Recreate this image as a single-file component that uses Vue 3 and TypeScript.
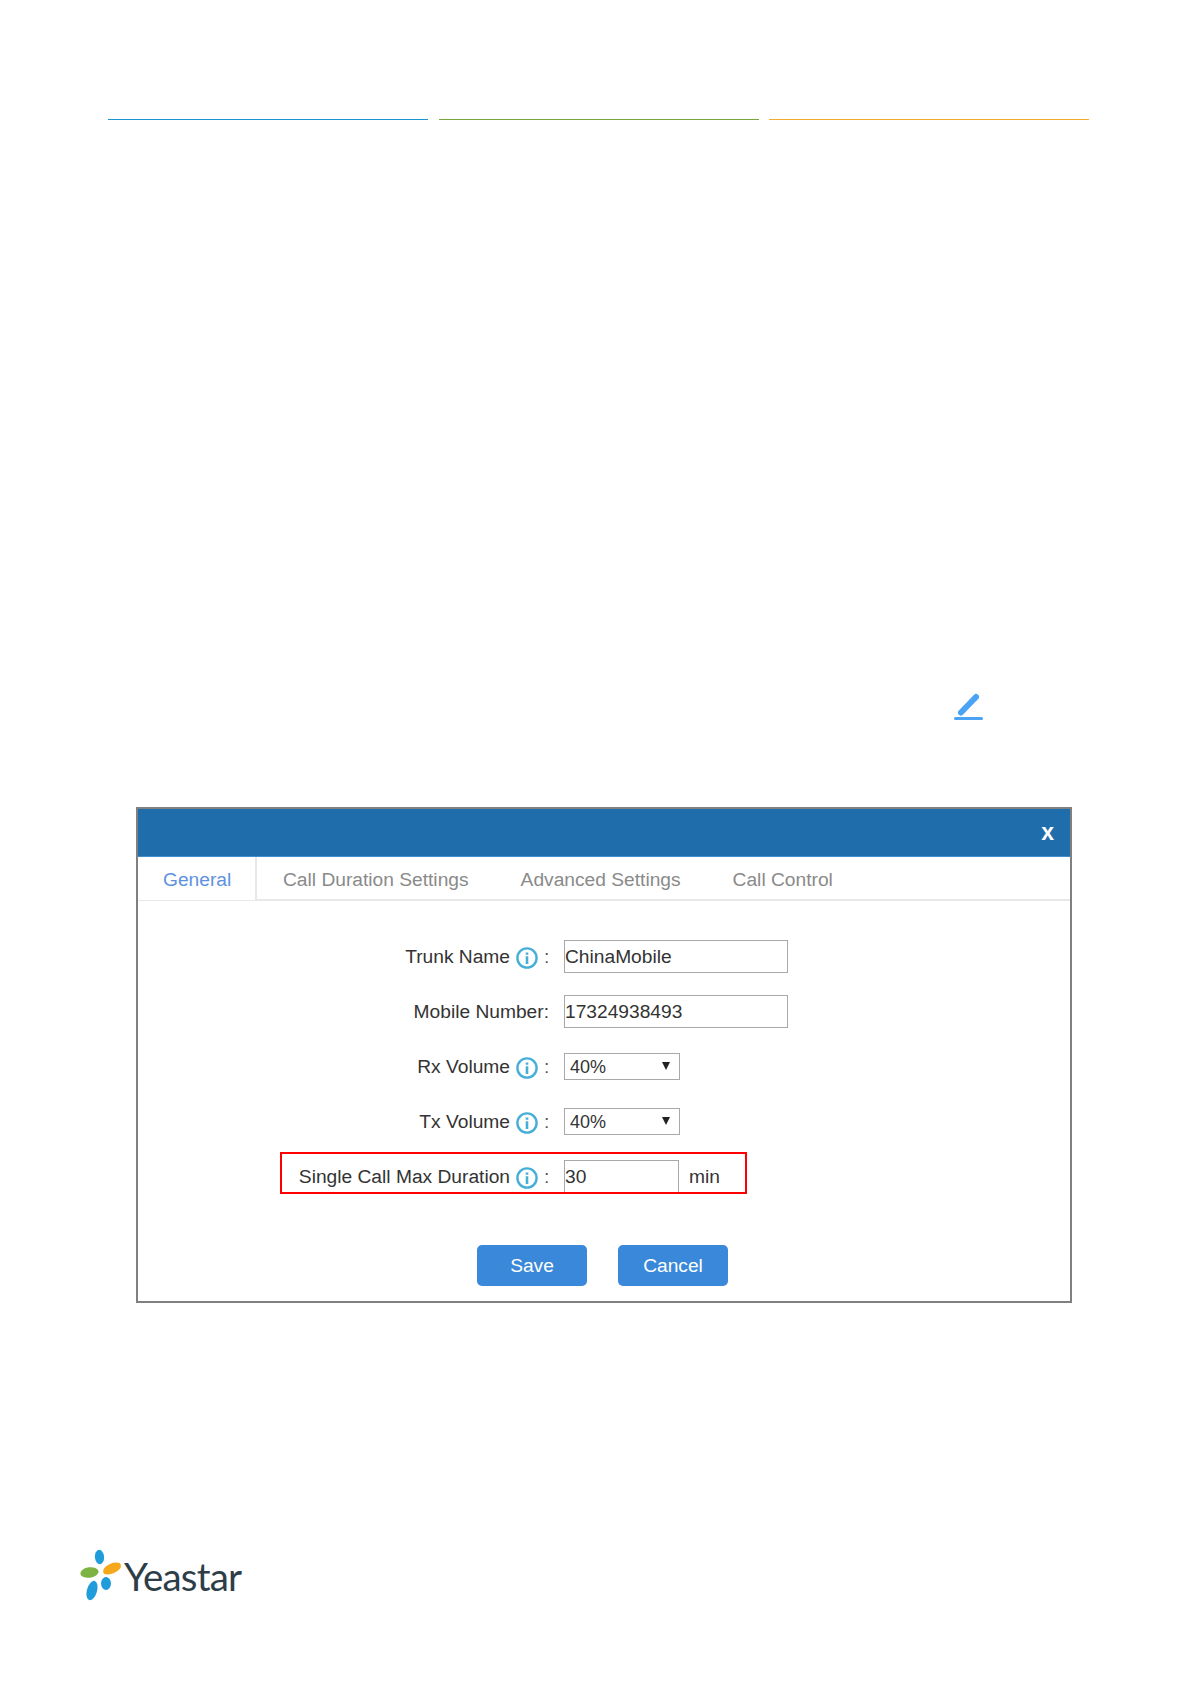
<script setup lang="ts">
interface Row {
  label: string
  info: boolean
  kind: 'text' | 'select' | 'unit'
  value: string
}

const tabs = ['Call Duration Settings', 'Advanced Settings', 'Call Control']

const rows: Row[] = [
  { label: 'Trunk Name', info: true, kind: 'text', value: 'ChinaMobile' },
  { label: 'Mobile Number:', info: false, kind: 'text', value: '17324938493' },
  { label: 'Rx Volume', info: true, kind: 'select', value: '40%' },
  { label: 'Tx Volume', info: true, kind: 'select', value: '40%' },
  { label: 'Single Call Max Duration', info: true, kind: 'unit', value: '30' },
]
</script>

<template>
  <div class="page">
    <div class="rules">
      <span class="rule rule_blue"></span>
      <span class="rule rule_green"></span>
      <span class="rule rule_orange"></span>
    </div>

    <div class="edit">
      <svg width="32" height="30" viewBox="0 0 32 30" fill="none">
        <path d="M9 21.5 L24 6" stroke="#4aa3f5" stroke-width="6" stroke-linecap="round" stroke-dasharray="17 2" />
        <path d="M3.5 27.5 H29.5" stroke="#4aa3f5" stroke-width="3" stroke-linecap="round" />
      </svg>
    </div>

    <div class="dialog">
      <div class="dialog_head"><span class="close">x</span></div>
      <div class="tabs">
        <div class="tab tab_active">General</div>
        <div v-for="tab in tabs" :key="tab" class="tab">{{ tab }}</div>
      </div>

      <div class="form">
        <div v-for="row in rows" :key="row.label" class="row">
          <div class="label">
            <span>{{ row.label }}</span>
            <template v-if="row.info">
              <svg class="info" width="22" height="22" viewBox="0 0 22 22" fill="none">
                <circle cx="11" cy="11" r="9.6" stroke="#45afd8" stroke-width="2.4" />
                <path d="M11 5.5 V7.8 M11 9.2 V17" stroke="#45afd8" stroke-width="2.6" />
              </svg>
              <span class="colon">:</span>
            </template>
          </div>
          <input v-if="row.kind === 'text'" class="field" :value="row.value" />
          <div v-else-if="row.kind === 'select'" class="select">
            <select class="select_input">
              <option>{{ row.value }}</option>
            </select>
            <span class="select_arrow"></span>
          </div>
          <template v-else>
            <input class="field field_unit" :value="row.value" />
            <span class="unit">min</span>
            <div class="highlight"></div>
          </template>
        </div>
      </div>

      <div class="actions">
        <button class="btn">Save</button>
        <button class="btn">Cancel</button>
      </div>
    </div>

    <div class="logo">
      <svg width="46" height="52" viewBox="0 0 46 52">
        <ellipse cx="20.5" cy="8" rx="4.6" ry="7.2" fill="#1f9ddb" transform="rotate(-4 20.5 8)" />
        <ellipse cx="10.5" cy="23.5" rx="9.2" ry="5.2" fill="#7cb342" transform="rotate(-8 10.5 23.5)" />
        <ellipse cx="33" cy="19.5" rx="9.6" ry="5" fill="#f5a81c" transform="rotate(-24 33 19.5)" />
        <ellipse cx="13" cy="41.5" rx="5" ry="10" fill="#1f9ddb" transform="rotate(16 13 41.5)" />
        <ellipse cx="27" cy="34.5" rx="5" ry="6.4" fill="#1f9ddb" />
      </svg>
      <span class="logo_text">Yeastar</span>
    </div>
  </div>
</template>

<style scoped>
.page {
  width: 1191px;
  height: 1684px;
  overflow: hidden;
  font-family: 'Liberation Sans', Arial, sans-serif;
  background: #fff;
}
.rules {
  display: flex;
  gap: 10.5px;
  padding: 119px 0 0 108px;
}
.rule {
  width: 320px;
  height: 1px;
}
.rule_blue {
  background: #1b95d0;
}
.rule_green {
  background: #74a83e;
}
.rule_orange {
  background: #f0ae2c;
}
.edit {
  display: flex;
  justify-content: flex-end;
  margin-top: 571px;
  padding-right: 207px;
  height: 30px;
}
.dialog {
  box-sizing: border-box;
  width: 936px;
  height: 496px;
  margin: 86px 0 0 136px;
  border: 2px solid #808080;
  background: #fff;
}
.dialog_head {
  display: flex;
  align-items: center;
  justify-content: flex-end;
  height: 47px;
  padding-right: 16px;
  background: #1f6dab;
  border-bottom: 1px solid #3e8fd0;
}
.close {
  color: #fff;
  font-size: 23px;
  font-weight: 700;
}
.tabs {
  display: flex;
  height: 42px;
  border-bottom: 2px solid #e8e8e8;
}
.tab {
  padding: 12px 26px 0 26px;
  color: #8a8a8a;
  font-size: 19.2px;
}
.tab_active {
  box-sizing: border-box;
  width: 119px;
  height: 43px;
  padding-left: 25px;
  color: #5d92e0;
  background: #fff;
  border-right: 2px solid #e8e8e8;
}
.form {
  display: flex;
  flex-direction: column;
  gap: 22px;
  padding-top: 39px;
}
.row {
  position: relative;
  display: flex;
  align-items: center;
  height: 33px;
}
.label {
  display: flex;
  align-items: center;
  justify-content: flex-end;
  width: 411px;
  margin-right: 15px;
  color: #333;
  font-size: 19.2px;
}
.info {
  margin-left: 6px;
  margin-top: 3px;
}
.colon {
  width: 5px;
  margin-left: 6px;
  color: #555;
}
.field {
  box-sizing: border-box;
  width: 224px;
  height: 33px;
  padding: 0;
  border: 1px solid #a9a9a9;
  color: #333;
  font: 19.2px 'Liberation Sans', Arial, sans-serif;
  outline: none;
}
.field_unit {
  width: 115px;
}
.unit {
  margin-left: 10px;
  color: #333;
  font-size: 19.2px;
}
.select {
  position: relative;
  width: 116px;
  height: 27px;
}
.select_input {
  box-sizing: border-box;
  width: 100%;
  height: 100%;
  padding: 0 5px;
  appearance: none;
  border: 1px solid #a9a9a9;
  border-radius: 0;
  background: #fff;
  color: #333;
  font: 18px 'Liberation Sans', Arial, sans-serif;
}
.select_arrow {
  position: absolute;
  top: 9px;
  right: 10px;
  border-top: 8px solid #222;
  border-left: 4px solid transparent;
  border-right: 4px solid transparent;
}
.highlight {
  position: absolute;
  left: 142px;
  top: -8px;
  box-sizing: border-box;
  width: 467px;
  height: 42px;
  border: 2px solid #f00;
  pointer-events: none;
}
.actions {
  display: flex;
  gap: 31px;
  margin-top: 52px;
  padding-left: 339px;
}
.btn {
  width: 110px;
  height: 41px;
  border: none;
  border-radius: 5px;
  background: #3a88d9;
  color: #fff;
  font: 19.2px 'Liberation Sans', Arial, sans-serif;
}
.logo {
  display: flex;
  align-items: center;
  margin: 246px 0 0 79px;
}
.logo_text {
  margin-top: 1px;
  margin-left: -1px;
  color: #2d3e48;
  font-family: Lato, sans-serif;
  font-size: 38.5px;
  letter-spacing: -0.8px;
}
</style>
